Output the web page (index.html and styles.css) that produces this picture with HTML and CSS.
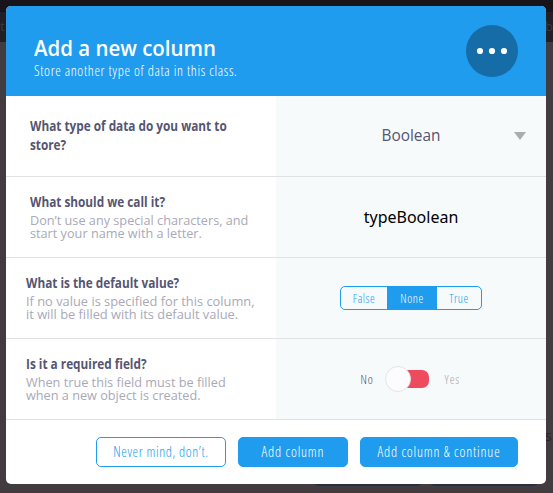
FILE: index.html
```html
<!DOCTYPE html>
<html lang="en">
<head>
<meta charset="utf-8">
<title>Add a new column</title>
<link rel="stylesheet" href="styles.css">
</head>
<body>
<div class="backdrop">
  <div class="topbar"></div>
  <div class="toolbar"><span>t</span><span class="edge-right">be</span></div>
  <div class="page"><span class="page-text">s</span>
    <div class="page-buttons"><i></i><i></i></div>
  </div>
</div>
<main class="modal">
  <header class="header">
    <div>
      <h1 class="title">Add a new column</h1>
      <p class="subtitle">Store another type of data in this class.</p>
    </div>
    <svg class="more" width="52" height="52" viewBox="0 0 52 52"><circle cx="26" cy="26" r="26" fill="#156ca7"/><g fill="#fff"><circle cx="14" cy="26" r="3.1"/><circle cx="26" cy="26" r="3.1"/><circle cx="38" cy="26" r="3.1"/></g></svg>
  </header>
  <section class="row">
    <div class="info"><div class="label">What type of data do you want to<br>store?</div></div>
    <div class="field select"><span>Boolean</span><svg class="arrow" width="12" height="8" viewBox="0 0 12 8"><path d="M0 0h12L6 8z" fill="#a9adae"/></svg></div>
  </section>
  <section class="row">
    <div class="info described"><div class="label">What should we call it?</div><div class="desc">Don’t use any special characters, and<br>start your name with a letter.</div></div>
    <div class="field name">typeBoolean</div>
  </section>
  <section class="row">
    <div class="info described wide"><div class="label">What is the default value?</div><div class="desc loose">If no value is specified for this column,<br>it will be filled with its default value.</div></div>
    <div class="field"><div class="segments"><span class="seg false">False</span><span class="seg none">None</span><span class="seg true">True</span></div></div>
  </section>
  <section class="row">
    <div class="info described wide"><div class="label">Is it a required field?</div><div class="desc">When true this field must be filled<br>when a new object is created.</div></div>
    <div class="field toggle"><span class="no">No</span><span class="switch"><i class="knob"></i><i class="track"></i></span><span class="yes">Yes</span></div>
  </section>
  <footer class="footer">
    <button class="btn outline">Never mind, don’t.</button>
    <button class="btn add">Add column</button>
    <button class="btn continue">Add column &amp; continue</button>
  </footer>
</main>
</body>
</html>
```
FILE: styles.css
```css
* { box-sizing: border-box; }
body { margin: 0; width: 553px; height: 493px; overflow: hidden; font-family: "Open Sans", sans-serif; color: #555572; padding: 6px; }
h1, p { margin: 0; }

.backdrop { position: absolute; inset: 0; z-index: -1; display: flex; flex-direction: column; overflow: hidden; background: #423c40; font-size: 13px; color: #3b383e; }
.topbar { height: 12px; background: #17141b; }
.toolbar { height: 30px; background: #211e24; display: flex; justify-content: space-between; line-height: 29px; }
.edge-right { width: 8px; }
.page { flex: 1; display: flex; flex-direction: column; justify-content: flex-end; align-items: flex-end; color: #29252d; font-size: 14px; }
.page-text { width: 8px; line-height: 20px; margin-bottom: 30px; }
.page-buttons { display: flex; gap: 8px; width: 239px; height: 17px; }
.page-buttons i { width: 108px; height: 11px; margin-top: -1px; border-radius: 5px; background: #27303f; }

.modal { width: 540px; height: 478px; border-radius: 5px; overflow: hidden; background: #fff; }
.header { height: 90px; padding: 0 28px; background: #209cee; display: flex; justify-content: space-between; align-items: center; color: #fff; }
.title { font-size: 22px; font-weight: 600; line-height: 28px; padding-top: 12px; white-space: nowrap; transform: scaleX(.929); transform-origin: left; }
.subtitle { font-size: 14px; font-weight: 300; font-stretch: 75%; letter-spacing: .67px; line-height: 20px; }
.more { display: block; }

.row { height: 81px; border-bottom: 1px solid #e0e1e3; display: flex; }
.info { width: 270px; padding-left: 24px; display: flex; flex-direction: column; justify-content: center; white-space: nowrap; }
.wide { padding-left: 20px; }
.described { padding-bottom: 2px; }
.label { font-size: 13.5px; font-weight: 700; line-height: 19px; transform: scaleX(.873); transform-origin: left; }
.desc { margin-top: 2px; font-size: 13px; line-height: 13px; color: #a9a9b8; transform: scaleX(.976); transform-origin: left; }
.loose { transform: scaleX(.988); }
.field { flex: 1; background: #f6fafb; display: flex; align-items: center; justify-content: center; }
.select { display: grid; grid-template-columns: 1fr auto 1fr; font-size: 15.4px; }
.select span { grid-column: 2; padding-bottom: 1px; }
.arrow { justify-self: end; margin-right: 20px; }
.name { font-family: "Noto Sans", sans-serif; font-size: 16px; color: #000; }

.segments { width: 142px; height: 24px; border: 1px solid #209cee; border-radius: 5px; display: flex; overflow: hidden; font-size: 12px; font-weight: 300; font-stretch: 75%; letter-spacing: .55px; line-height: 23px; text-align: center; color: #209cee; }
.false { width: 46px; }
.none { width: 50px; background: #209cee; color: #fff; }
.true { flex: 1; }

.toggle { font-size: 12px; font-weight: 300; font-stretch: 75%; letter-spacing: .8px; }
.no { width: 13px; color: #3f3f60; }
.yes { width: 17px; color: #a4a4b2; letter-spacing: 1px; }
.switch { display: flex; align-items: center; width: 45px; margin: 0 15px 0 11px; }
.knob { flex: none; width: 26px; height: 26px; border: 1px solid #e5e5e7; border-radius: 50%; background: #fcfbfd; z-index: 1; }
.track { flex: none; width: 31px; height: 18px; margin-left: -13px; border-radius: 0 7px 7px 0; background: #ef4b5e; }

.footer { height: 64px; padding: 0 28px; display: flex; gap: 12px; justify-content: flex-end; align-items: center; }
.btn { height: 30px; padding: 0; border: 1px solid #209cee; border-radius: 5px; background: #209cee; color: #fff; font: 300 14px/28px "Open Sans", sans-serif; font-stretch: 75%; letter-spacing: .85px; white-space: nowrap; }
.outline { width: 130px; background: #fff; color: #209cee; letter-spacing: .6px; }
.add { width: 110px; }
.continue { width: 158px; }
```
